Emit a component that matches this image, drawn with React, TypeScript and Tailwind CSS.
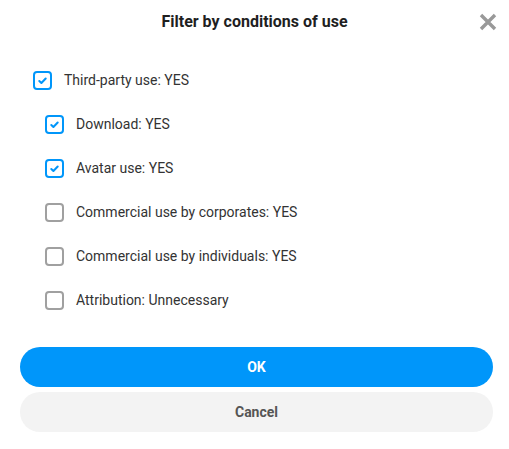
import React, { useState } from 'react';

type Item = { id: string; label: string; checked: boolean; nested: boolean };

const initial: Item[] = [
  { id: 'third', label: 'Third-party use: YES', checked: true, nested: false },
  { id: 'download', label: 'Download: YES', checked: true, nested: true },
  { id: 'avatar', label: 'Avatar use: YES', checked: true, nested: true },
  { id: 'corp', label: 'Commercial use by corporates: YES', checked: false, nested: true },
  { id: 'indiv', label: 'Commercial use by individuals: YES', checked: false, nested: true },
  { id: 'attr', label: 'Attribution: Unnecessary', checked: false, nested: true },
];

const Check = ({ checked }: { checked: boolean }) => (
  <span
    className={`w-[19px] h-[19px] rounded-[4px] border-2 flex items-center justify-center shrink-0 ${
      checked ? 'border-[#0096fa]' : 'border-[#a0a0a0]'
    }`}
  >
    {checked && (
      <svg width="11" height="11" viewBox="0 0 12 12" fill="none" stroke="#0096fa" strokeWidth="2.2" strokeLinecap="round" strokeLinejoin="round">
        <path d="M2.5 6.5l2.3 2.2L9.5 3.8" />
      </svg>
    )}
  </span>
);

const App: React.FC = () => {
  const [items, setItems] = useState(initial);

  const toggle = (id: string) =>
    setItems(items.map((i) => (i.id === id ? { ...i, checked: !i.checked } : i)));

  return (
    <div className="w-[509px] h-[449px] bg-white font-['Roboto',sans-serif] text-[#333] flex flex-col">
      <div className="relative h-[44px] flex items-center justify-center">
        <h2 className="text-[16px] font-bold text-[#1f1f1f]">Filter by conditions of use</h2>
        <button className="absolute right-[11px] top-[12px] text-[#999]">
          <svg width="20" height="20" viewBox="0 0 20 20" stroke="currentColor" strokeWidth="3.4" strokeLinecap="butt">
            <path d="M3 3l14 14M17 3L3 17" />
          </svg>
        </button>
      </div>

      <div className="flex flex-col pt-[14px]">
        {items.map((i) => (
          <label
            key={i.id}
            onClick={() => toggle(i.id)}
            className={`h-[44px] flex items-center gap-[12px] cursor-pointer ${i.nested ? 'pl-[45px]' : 'pl-[33px]'}`}
          >
            <Check checked={i.checked} />
            <span className="text-[14px] leading-none">{i.label}</span>
          </label>
        ))}
      </div>

      <div className="pl-[20px] pr-[16px] pt-[25px] flex flex-col gap-[5px]">
        <button className="h-[40px] rounded-full bg-[#0096fa] text-white text-[14px] font-bold">OK</button>
        <button className="h-[40px] rounded-full bg-[#f3f3f3] text-[#555] text-[14px] font-bold">Cancel</button>
      </div>
    </div>
  );
};

export default App;
